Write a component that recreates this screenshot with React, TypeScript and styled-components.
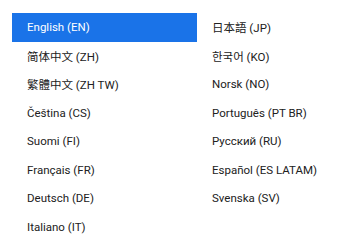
import React from 'react';
import styled, { createGlobalStyle } from 'styled-components';

const GlobalStyle = createGlobalStyle`
  html, body {
    margin: 0;
    padding: 0;
    background: #ffffff;
  }
  body {
    font-family: Roboto, "Noto Sans CJK SC", "Noto Sans CJK JP", "Noto Sans CJK KR", sans-serif;
  }
`;

const Menu = styled.ul`
  list-style: none;
  margin: 0;
  padding: 13px 0 0 12px;
  display: grid;
  grid-template-columns: 185px minmax(0, 1fr);
  grid-template-rows: repeat(8, 28.5px);
  grid-auto-flow: column;
  box-sizing: border-box;
  width: 357px;
`;

const Item = styled.li<{ $active?: boolean }>`
  display: flex;
  align-items: center;
  padding: 0 15px;
  font-size: 11.5px;
  color: ${(p) => (p.$active ? '#ffffff' : '#212121')};
  background: ${(p) => (p.$active ? '#1a73e8' : 'transparent')};
  white-space: nowrap;
  cursor: pointer;
`;

const languages = [
  'English (EN)',
  '简体中文 (ZH)',
  '繁體中文 (ZH TW)',
  'Čeština (CS)',
  'Suomi (FI)',
  'Français (FR)',
  'Deutsch (DE)',
  'Italiano (IT)',
  '日本語 (JP)',
  '한국어 (KO)',
  'Norsk (NO)',
  'Português (PT BR)',
  'Русский (RU)',
  'Español (ES LATAM)',
  'Svenska (SV)',
];

export default function App() {
  return (
    <>
      <GlobalStyle />
      <Menu>
        {languages.map((lang, i) => (
          <Item key={lang} $active={i === 0}>
            {lang}
          </Item>
        ))}
      </Menu>
    </>
  );
}
